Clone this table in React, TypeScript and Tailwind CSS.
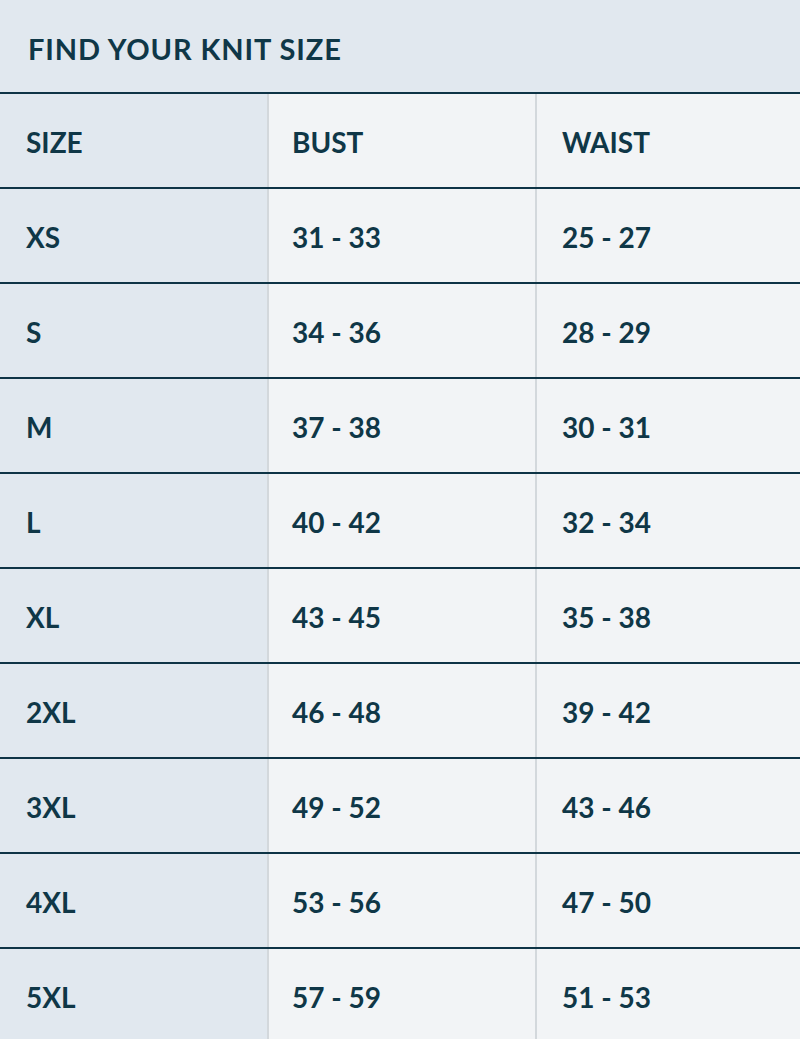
const rows = [
  ['XS', '31 - 33', '25 - 27'],
  ['S', '34 - 36', '28 - 29'],
  ['M', '37 - 38', '30 - 31'],
  ['L', '40 - 42', '32 - 34'],
  ['XL', '43 - 45', '35 - 38'],
  ['2XL', '46 - 48', '39 - 42'],
  ['3XL', '49 - 52', '43 - 46'],
  ['4XL', '53 - 56', '47 - 50'],
  ['5XL', '57 - 59', '51 - 53'],
]

function Row({ cells }: { cells: string[] }) {
  return (
    <div className="grid grid-cols-[269px_268px_263px] border-t-2 border-[#0e3446] h-[95px]">
      <div className="bg-[#e1e8ef] border-r-2 border-[#d3d8dc] flex items-center pl-[26px] pt-[3px]">{cells[0]}</div>
      <div className="bg-[#f2f4f6] border-r-2 border-[#d3d8dc] flex items-center pl-[23px] pt-[3px]">{cells[1]}</div>
      <div className="bg-[#f2f4f6] flex items-center pl-[25px] pt-[3px]">{cells[2]}</div>
    </div>
  )
}

export default function App() {
  return (
    <div
      className="w-[800px] h-[1039px] overflow-hidden bg-[#f2f4f6] text-[#0f3747] font-bold text-[28px]"
      style={{ fontFamily: 'Lato, "Noto Sans", sans-serif' }}
    >
      <div className="h-[92px] bg-[#e1e8ef] flex items-center pl-[28px] pt-[6px] text-[29px] tracking-[0.9px]">
        FIND YOUR KNIT SIZE
      </div>
      <Row cells={['SIZE', 'BUST', 'WAIST']} />
      {rows.map((r) => (
        <Row key={r[0]} cells={r} />
      ))}
    </div>
  )
}
